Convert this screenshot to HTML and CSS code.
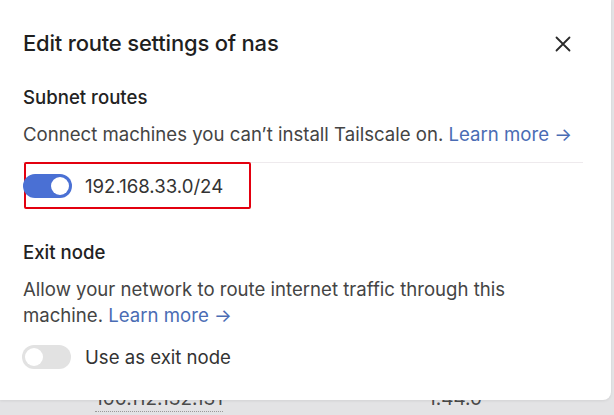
FILE: index.html
```html
<!DOCTYPE html>
<html>
<head>
<meta charset="utf-8">
<link rel="stylesheet" href="styles.css">
</head>
<body>
<div class="backdrop">
  <div class="row-behind">
    <span class="ip">100.112.132.131</span>
    <span class="ver">1.44.0</span>
  </div>
</div>
<div class="modal">
  <div class="header">
    <h1 class="title">Edit route settings of nas</h1>
    <svg class="close" width="16" height="16" viewBox="0 0 16 16"><path d="M1.5 1.5 L14.5 14.5 M14.5 1.5 L1.5 14.5" stroke="#2a2a2a" stroke-width="1.8" stroke-linecap="round"/></svg>
  </div>
  <section class="section">
    <h2 class="sub">Subnet routes</h2>
    <p class="desc single">Connect machines you can’t install Tailscale on. <a class="link">Learn more →</a></p>
    <div class="divider"></div>
    <div class="highlight">
      <span class="toggle on"><span class="knob"></span></span>
      <span class="label">192.168.33.0/24</span>
    </div>
  </section>
  <section class="section exit">
    <h2 class="sub">Exit node</h2>
    <p class="desc narrow">Allow your network to route internet traffic through this machine. <a class="link">Learn more →</a></p>
    <div class="opt">
      <span class="toggle off"><span class="knob"></span></span>
      <span class="label">Use as exit node</span>
    </div>
  </section>
</div>
</body>
</html>
```
FILE: styles.css
```css
* { box-sizing: border-box; }
html, body { margin: 0; padding: 0; }
body {
  width: 614px; height: 415px; overflow: hidden;
  background: #e3e3e5;
  font-family: Inter, "Noto Sans", sans-serif;
  position: relative;
}
.backdrop { padding-top: 388px; }
.row-behind { display: flex; height: 27px; color: #4a4a4a; font-size: 19px; }
.ip { margin-left: 95px; border-bottom: 1px dotted #999; height: 24px; line-height: 22px; }
.ver { margin-left: 205px; line-height: 22px; }
.modal {
  position: absolute; left: 0; top: 0;
  width: 611px; height: 400px;
  background: #fff;
  border-bottom-right-radius: 8px;
  box-shadow: 0 1px 3px rgba(0,0,0,0.08);
  padding: 29px 28px 0 23px;
}
.header { display: flex; justify-content: space-between; align-items: center; height: 28px; }
.title { margin: 0; font-size: 22px; font-weight: 500; color: #1f1f1f; letter-spacing: -0.2px; }
.close { margin-right: 12px; margin-top: 2px; }
.section { margin-top: 30px; }
.sub { margin: 0; font-size: 18.6px; font-weight: 500; color: #222; line-height: 20px; }
.desc { margin: 14px 0 0; font-size: 18.6px; color: #444; line-height: 26px; }
.desc.single { white-space: nowrap; }
.desc.narrow { max-width: 520px; margin-top: 14px; }
.link { color: #4a6cb4; text-decoration: none; }
.divider { height: 1px; background: #eeeaed; margin: 15px 0 0 0; width: 560px; }
.highlight {
  display: flex; align-items: center; gap: 13px;
  width: 227px; height: 47px;
  margin-left: 1px; margin-top: -1px;
  border: 2px solid #e3000f; border-radius: 2px;
}
.highlight .toggle { margin-left: -3px; }
.toggle {
  display: inline-flex; align-items: center; flex: none;
  width: 49px; height: 24px; border-radius: 12px; padding: 3px;
}
.toggle.on { background: #4a70d4; justify-content: flex-end; }
.toggle.off { background: #e2e2e2; justify-content: flex-start; }
.knob { width: 18px; height: 18px; border-radius: 50%; background: #fff; }
.label { font-size: 18.6px; color: #333; }
.exit { margin-top: 33px; }
.opt { display: flex; align-items: center; gap: 14px; margin-top: 17px; margin-left: -1px; }
```
